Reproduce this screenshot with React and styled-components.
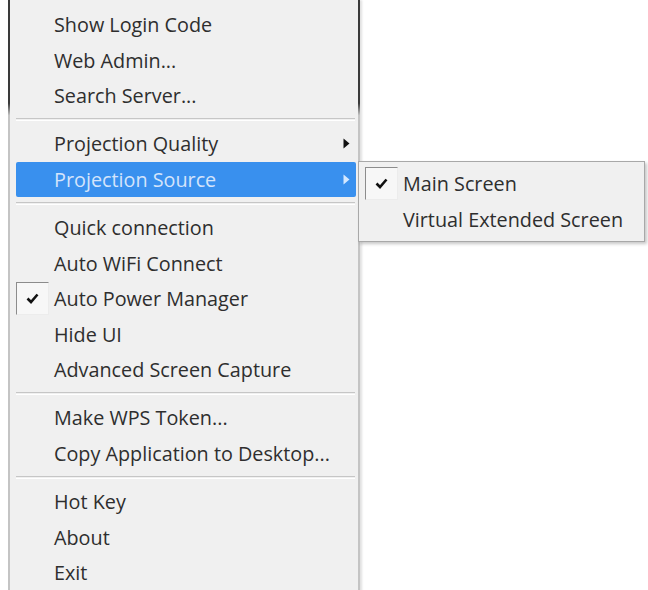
import React from "react";
import styled, { createGlobalStyle } from "styled-components";

const GlobalStyle = createGlobalStyle`
  html, body {
    margin: 0;
    padding: 0;
    background: #ffffff;
    overflow: hidden;
  }
  body {
    font-family: "Open Sans", "Noto Sans", "DejaVu Sans", sans-serif;
  }
`;

const Desk = styled.div`
  display: flex;
  align-items: flex-start;
  padding-left: 8px;
  height: 590px;
`;

const Menu = styled.div`
  width: 340px;
  padding: 7px 2px 4px 6px;
  background: #f0f0f0;
  border-left: 2px solid #c4c4c4;
  border-right: 2px solid #b8b8b8;
  border-image: linear-gradient(to bottom, #3a3a3a 0, #3a3a3a 104px, #c4c4c4 116px, #c4c4c4 100%) 1;
  box-shadow: 2px 0 2px rgba(0, 0, 0, 0.12);
`;

const SubMenu = styled.div`
  position: relative;
  z-index: 1;
  width: 277px;
  margin: 161px 0 0 -2px;
  padding: 4px 2px 4px 6px;
  background: #f0f0f0;
  border: 1px solid #a8a8a8;
  box-shadow: 2px 2px 3px rgba(0, 0, 0, 0.22);
`;

const Item = styled.div`
  display: flex;
  align-items: center;
  height: 35.6px;
  padding-right: 6px;
  box-sizing: border-box;
  font-size: 19.8px;
  color: ${(p) => (p.$active ? "#d4e4fb" : "#2e2e2e")};
  background: ${(p) => (p.$active ? "#3990ee" : "transparent")};
  border-radius: ${(p) => (p.$active ? "2px" : "0")};
  white-space: nowrap;
`;

const CheckBox = styled.div`
  width: 33px;
  height: 33px;
  flex: none;
  display: flex;
  align-items: center;
  justify-content: center;
  box-sizing: border-box;
  ${(p) =>
    p.$on &&
    `
    background: #f7f7f7;
    border-top: 1px solid #8c8c8c;
    border-left: 1px solid #8c8c8c;
    border-right: 1px solid #ececec;
    border-bottom: 1px solid #ececec;
  `}
`;

const Label = styled.span`
  flex: 1;
  margin-left: 5px;
`;

const Separator = styled.div`
  height: 12.4px;
  display: flex;
  align-items: center;

  &::after {
    content: "";
    flex: 1;
    height: 1px;
    border-top: 1px solid #c6c6c6;
    border-bottom: 1px solid #ffffff;
    margin-right: 1px;
  }
`;

const Check = () => (
  <svg width="13" height="11" viewBox="0 0 13 11">
    <path d="M1.5 5.5 L5 9 L11.5 1.5" fill="none" stroke="#111" strokeWidth="2.6" />
  </svg>
);

const Arrow = ({ color }) => (
  <svg width="7" height="11" viewBox="0 0 7 11">
    <path d="M0.5 0.5 L6.5 5.5 L0.5 10.5 Z" fill={color} />
  </svg>
);

const MenuItem = ({ label, checked, active, sub }) => (
  <Item $active={active}>
    <CheckBox $on={checked}>{checked && <Check />}</CheckBox>
    <Label>{label}</Label>
    {sub && <Arrow color={active ? "#d4e8ff" : "#111"} />}
  </Item>
);

export default function App() {
  return (
    <>
      <GlobalStyle />
      <Desk>
        <Menu>
          <MenuItem label="Show Login Code" />
          <MenuItem label="Web Admin..." />
          <MenuItem label="Search Server..." />
          <Separator />
          <MenuItem label="Projection Quality" sub />
          <MenuItem label="Projection Source" sub active />
          <Separator />
          <MenuItem label="Quick connection" />
          <MenuItem label="Auto WiFi Connect" />
          <MenuItem label="Auto Power Manager" checked />
          <MenuItem label="Hide UI" />
          <MenuItem label="Advanced Screen Capture" />
          <Separator />
          <MenuItem label="Make WPS Token..." />
          <MenuItem label="Copy Application to Desktop..." />
          <Separator />
          <MenuItem label="Hot Key" />
          <MenuItem label="About" />
          <MenuItem label="Exit" />
        </Menu>
        <SubMenu>
          <MenuItem label="Main Screen" checked />
          <MenuItem label="Virtual Extended Screen" />
        </SubMenu>
      </Desk>
    </>
  );
}
